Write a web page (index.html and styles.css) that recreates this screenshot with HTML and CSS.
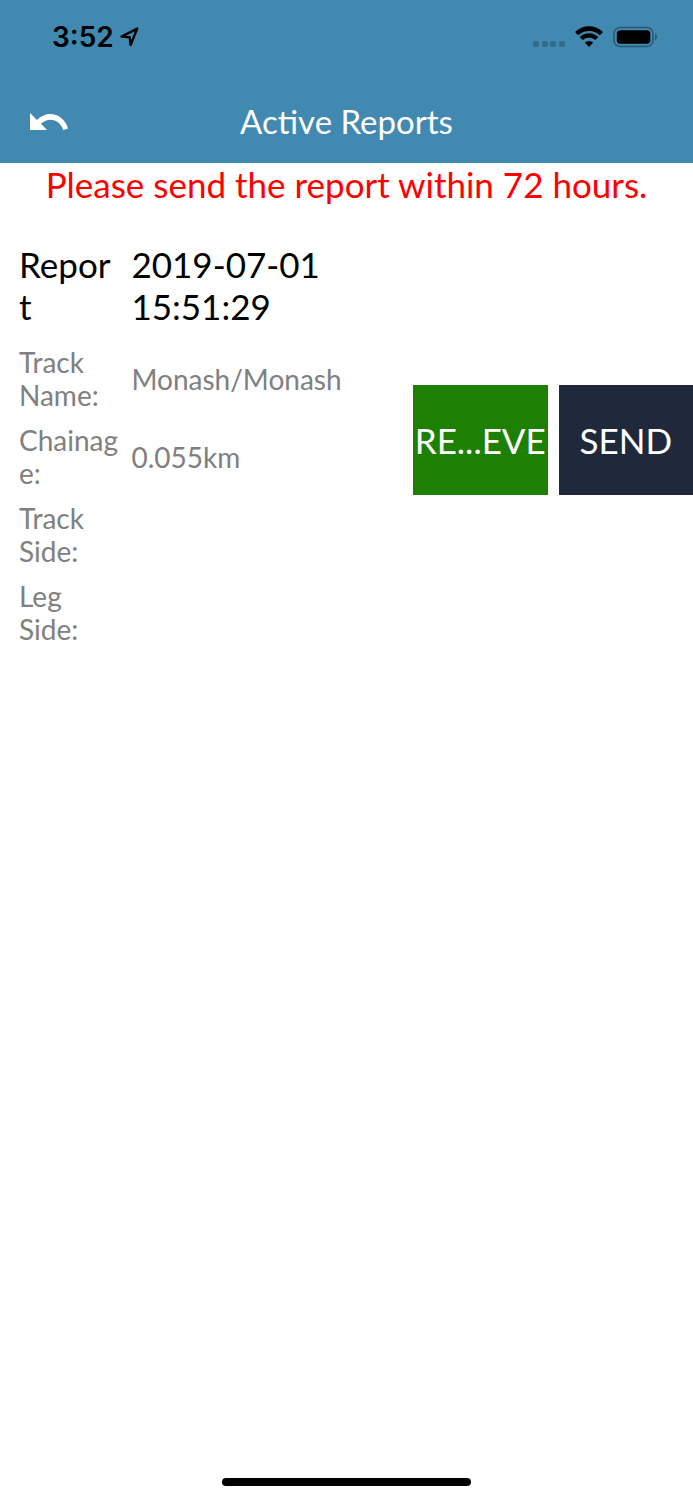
FILE: index.html
```
<!DOCTYPE html>
<html lang="en">
<head>
    <meta charset="UTF-8">
    <meta name="viewport" content="width=device-width, initial-scale=1.0">
    <title>Active Reports</title>
    <link rel="stylesheet" href="styles.css">
</head>
<body>
    <header>
        <div class="status-bar">
            <div class="status-left">
                <span class="clock">3:52</span>
                <svg class="location" width="20" height="20" viewBox="0 0 20 20" aria-hidden="true">
                    <path d="M1.6 9.6 L17.2 1.6 L10.6 18 L9.6 10.2 Z" fill="none" stroke="#000" stroke-width="2.4" stroke-linejoin="round"/>
                </svg>
            </div>
            <div class="status-right">
                <svg width="32" height="28" viewBox="0 0 32 28" aria-hidden="true">
                    <g fill="#346b8a">
                        <rect x="0" y="18" width="6" height="6" rx="2"/>
                        <rect x="9" y="18" width="6" height="6" rx="2"/>
                        <rect x="17" y="18" width="6" height="6" rx="2"/>
                        <rect x="26" y="18" width="6" height="6" rx="2"/>
                    </g>
                </svg>
                <svg width="28" height="28" viewBox="0 0 28 28" aria-hidden="true">
                    <path d="M1.6 10.6 A18 18 0 0 1 26.4 10.6" fill="none" stroke="#000" stroke-width="4.6"/>
                    <path d="M6.2 15.6 A11 11 0 0 1 21.8 15.6" fill="none" stroke="#000" stroke-width="4.2"/>
                    <path d="M14 24 L9.8 19.6 A6 6 0 0 1 18.2 19.6 Z"/>
                </svg>
                <svg width="46" height="28" viewBox="0 0 46 28" aria-hidden="true">
                    <rect x="1" y="4.5" width="39" height="19" rx="6" fill="none" stroke="#2b5973" stroke-width="1.6"/>
                    <rect x="3.8" y="7.2" width="33.5" height="13.6" rx="3.5"/>
                    <path d="M42 10.5 A4 4 0 0 1 42 17.5 Z" fill="#2b5973"/>
                </svg>
            </div>
        </div>
        <nav class="nav-bar">
            <button class="back" type="button" aria-label="Back">
                <svg width="40" height="20" viewBox="0 0 40 20" aria-hidden="true">
                    <path d="M1 1 V18 H18 L12 11.8 C19.5 5 30.5 7 34.2 18 L39 16.4 C34.5 1.2 18 -2.6 8 8 Z" fill="#fff"/>
                </svg>
            </button>
            <h1>Active Reports</h1>
        </nav>
    </header>

    <main>
        <p class="notice">Please send the report within 72 hours.</p>

        <section class="report">
            <dl class="details">
                <div class="row title">
                    <dt>Report</dt>
                    <dd>2019-07-01 15:51:29</dd>
                </div>
                <div class="row">
                    <dt>Track Name:</dt>
                    <dd>Monash/Monash</dd>
                </div>
                <div class="row">
                    <dt>Chainage:</dt>
                    <dd>0.055km</dd>
                </div>
                <div class="row">
                    <dt>Track Side:</dt>
                    <dd></dd>
                </div>
                <div class="row">
                    <dt>Leg Side:</dt>
                    <dd></dd>
                </div>
            </dl>
            <div class="actions">
                <button class="retrieve" type="button">RE...EVE</button>
                <button class="send" type="button">SEND</button>
            </div>
        </section>
    </main>

    <footer>
        <div class="home-indicator"></div>
    </footer>
</body>
</html>
```
FILE: styles.css
```
* {
    box-sizing: border-box;
}
body {
    font-family: Lato, sans-serif;
    background-color: #fff;
    margin: 0;
    display: flex;
    flex-direction: column;
    min-height: 100vh;
}
header {
    background-color: #4189b0;
}
.status-bar {
    display: flex;
    justify-content: space-between;
    align-items: center;
    height: 74px;
    padding: 0 34px 0 52px;
}
.status-left {
    display: flex;
    align-items: center;
    gap: 6px;
}
.clock {
    font-family: Inter, sans-serif;
    font-size: 28px;
    font-weight: 600;
    line-height: 34px;
}
.status-right {
    display: flex;
    align-items: center;
    gap: 10px;
}
.nav-bar {
    display: grid;
    grid-template-columns: 1fr auto 1fr;
    align-items: center;
    height: 89px;
    padding: 4px 29px 0;
}
.back {
    justify-self: start;
    display: flex;
    padding: 2px 0 0;
    border: none;
    background: none;
    cursor: pointer;
}
h1 {
    margin: 0;
    color: #fff;
    font-size: 33px;
    font-weight: 400;
    line-height: 42px;
}
main {
    flex: 1;
}
.notice {
    margin: 0;
    color: #f00;
    font-size: 35px;
    line-height: 42px;
    text-align: center;
}
.report {
    display: grid;
    grid-template-columns: 402fr 280fr;
    align-items: center;
    gap: 11px;
    margin-top: 28px;
}
.details {
    display: flex;
    flex-direction: column;
    gap: 12px;
    margin: 0;
    padding: 10px 0 0 19px;
}
.row {
    display: grid;
    grid-template-columns: 3fr 8fr;
    align-items: center;
    gap: 11px;
    color: #808080;
    font-size: 28px;
    line-height: 33px;
}
.row dt {
    min-width: 0;
    overflow-wrap: anywhere;
}
.row dd {
    margin: 0;
}
.title {
    padding-bottom: 7px;
    color: #000;
    font-size: 35px;
    line-height: 42px;
}
.actions {
    display: grid;
    grid-template-columns: 1fr 1fr;
    gap: 11px;
}
.actions button {
    height: 110px;
    padding: 0;
    border: none;
    color: #fff;
    font-family: inherit;
    font-size: 35px;
    white-space: nowrap;
    cursor: pointer;
}
.retrieve {
    background-color: #1e8003;
}
.send {
    background-color: #1f293b;
}
footer {
    padding-bottom: 14px;
}
.home-indicator {
    width: 36%;
    height: 8px;
    margin: 0 auto;
    border-radius: 4px;
    background-color: #000;
}
```
